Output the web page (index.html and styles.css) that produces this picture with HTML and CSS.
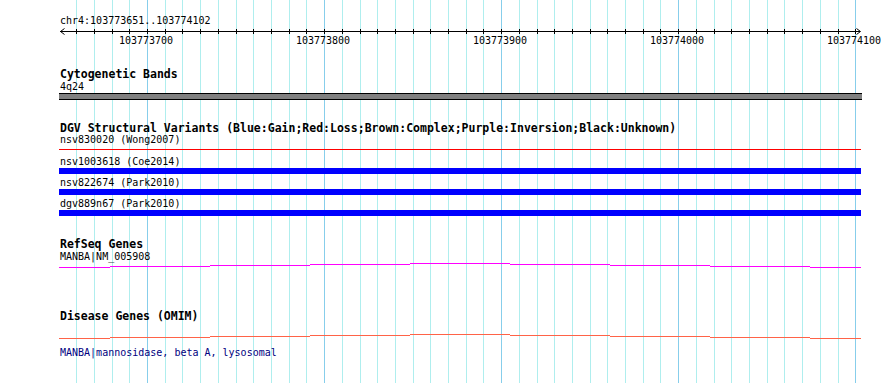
FILE: index.html
```html
<!DOCTYPE html>
<html lang="en">
<head>
    <meta charset="UTF-8">
    <meta name="viewport" content="width=device-width, initial-scale=1.0">
    <title>chr4:103773651..103774102</title>
    <link rel="stylesheet" href="styles.css">
</head>
<body>
    <div class="view">
        <div class="grid" id="grid"></div>

        <div class="content">
            <div class="ruler">
                <div class="ruler-label">chr4:103773651..103774102</div>
                <div class="scale" id="scale">
                    <div class="axis"></div>
                    <svg class="arrow arrow-left" width="5" height="7" viewBox="0 0 5 7">
                        <polyline points="4.5,0.5 0.5,3.5 4.5,6.5"></polyline>
                    </svg>
                    <svg class="arrow arrow-right" width="5" height="7" viewBox="0 0 5 7">
                        <polyline points="0.5,0.5 4.5,3.5 0.5,6.5"></polyline>
                    </svg>
                </div>
            </div>

            <div class="track track-cyto">
                <div class="track-title">Cytogenetic Bands</div>
                <div class="feature-label label-first">4q24</div>
                <div class="band"></div>
            </div>

            <div class="track track-dgv">
                <div class="track-title">DGV Structural Variants (Blue:Gain;Red:Loss;Brown:Complex;Purple:Inversion;Black:Unknown)</div>
                <div class="feature-label label-first">nsv830020 (Wong2007)</div>
                <div class="loss-line"></div>
                <div class="feature-label label-gap">nsv1003618 (Coe2014)</div>
                <div class="gain-bar"></div>
                <div class="feature-label">nsv822674 (Park2010)</div>
                <div class="gain-bar"></div>
                <div class="feature-label">dgv889n67 (Park2010)</div>
                <div class="gain-bar"></div>
            </div>

            <div class="track track-refseq">
                <div class="track-title">RefSeq Genes</div>
                <div class="feature-label label-tight">MANBA|NM_005908</div>
                <svg class="gene-line gene-refseq" width="802" height="6" viewBox="0 0 802 6">
                    <rect x="0" y="5" width="51" height="1"></rect>
                    <rect x="51" y="4" width="100" height="1"></rect>
                    <rect x="151" y="3" width="100" height="1"></rect>
                    <rect x="251" y="2" width="100" height="1"></rect>
                    <rect x="351" y="1" width="100" height="1"></rect>
                    <rect x="451" y="2" width="100" height="1"></rect>
                    <rect x="551" y="3" width="100" height="1"></rect>
                    <rect x="651" y="4" width="100" height="1"></rect>
                    <rect x="751" y="5" width="51" height="1"></rect>
                </svg>
            </div>

            <div class="track track-omim">
                <div class="track-title">Disease Genes (OMIM)</div>
                <svg class="gene-line gene-omim" width="802" height="6" viewBox="0 0 802 6">
                    <rect x="0" y="5" width="51" height="1"></rect>
                    <rect x="51" y="4" width="100" height="1"></rect>
                    <rect x="151" y="3" width="100" height="1"></rect>
                    <rect x="251" y="2" width="100" height="1"></rect>
                    <rect x="351" y="1" width="100" height="1"></rect>
                    <rect x="451" y="2" width="100" height="1"></rect>
                    <rect x="551" y="3" width="100" height="1"></rect>
                    <rect x="651" y="4" width="100" height="1"></rect>
                    <rect x="751" y="5" width="51" height="1"></rect>
                </svg>
                <div class="feature-label omim-label">MANBA|mannosidase, beta A, lysosomal</div>
            </div>
        </div>
    </div>

    <script>
        const start = 103773651;
        const pxPerBase = 1.7705;
        const grid = document.getElementById('grid');
        const scale = document.getElementById('scale');

        function toX(pos) {
            return Math.round(60.3 + (pos - start) * pxPerBase);
        }

        for (let pos = 103773660; pos <= 103774100; pos += 10) {
            const x = toX(pos);
            const major = pos % 100 === 0;

            const line = document.createElement('div');
            line.className = major ? 'gridline major' : 'gridline';
            line.style.left = x + 'px';
            grid.appendChild(line);

            const tick = document.createElement('div');
            tick.className = 'tick';
            tick.style.left = x + 'px';
            scale.appendChild(tick);

            if (major) {
                const label = document.createElement('div');
                label.className = 'tick-label';
                label.style.left = (x - 31) + 'px';
                label.textContent = pos;
                scale.appendChild(label);
            }
        }
    </script>
</body>
</html>
```

FILE: styles.css
```css
* {
    margin: 0;
    padding: 0;
    box-sizing: border-box;
}

body {
    background: white;
    font-family: "DejaVu Sans Mono", "Liberation Mono", monospace;
    color: black;
}

.view {
    position: relative;
    width: 890px;
    height: 383px;
    overflow: hidden;
    background: white;
}

.grid {
    position: absolute;
    top: 0;
    left: 0;
    right: 0;
    bottom: 0;
    z-index: 0;
}

.gridline {
    position: absolute;
    top: 0;
    bottom: 0;
    width: 1px;
    background: #afeeee;
}

.gridline.major {
    background: #87ceeb;
}

.content {
    position: relative;
    z-index: 1;
    padding-left: 60px;
}

/* ruler */

.ruler-label {
    margin-top: 16px;
    font-size: 10px;
    line-height: 10px;
}

.scale {
    position: relative;
    height: 20px;
    margin-left: -60px;
}

.axis {
    position: absolute;
    top: 5px;
    left: 60px;
    width: 800px;
    height: 1px;
    background: black;
}

.arrow {
    position: absolute;
    top: 2px;
    fill: none;
    stroke: black;
    stroke-width: 1;
}

.arrow-left {
    left: 60px;
}

.arrow-right {
    left: 856px;
}

.tick {
    position: absolute;
    top: 3px;
    width: 1px;
    height: 5px;
    background: black;
}

.tick-label {
    position: absolute;
    top: 10px;
    width: 60px;
    text-align: center;
    font-size: 10px;
    line-height: 10px;
}

/* tracks */

.track-title {
    font-size: 11.5px;
    line-height: 12px;
    font-weight: bold;
    white-space: nowrap;
}

.feature-label {
    margin-top: 4px;
    font-size: 10px;
    line-height: 10px;
    white-space: nowrap;
}

.feature-label.label-first {
    margin-top: 1px;
}

.feature-label.label-gap {
    margin-top: 7px;
}

.feature-label.label-tight {
    margin-top: 2px;
}

.track-cyto {
    margin-top: 22px;
}

.track-cyto .label-first {
    margin-top: 2px;
}

.band {
    margin-top: 1px;
    margin-left: -1px;
    width: 803px;
    height: 7px;
    background: #808080;
    border-top: 1px solid black;
    border-bottom: 1px solid black;
}

.track-dgv {
    margin-top: 22px;
}

.loss-line {
    margin-top: 4px;
    margin-left: -1px;
    width: 802px;
    height: 1px;
    background: #ff0000;
}

.gain-bar {
    margin-top: 1px;
    margin-left: -1px;
    width: 802px;
    height: 6px;
    background: #0000ff;
}

.track-refseq {
    margin-top: 22px;
}

.gene-line {
    display: block;
    margin-left: -1px;
    shape-rendering: crispEdges;
}

.gene-refseq {
    margin-top: 0;
    fill: #ff00ff;
}

.track-omim {
    margin-top: 42px;
}

.gene-omim {
    margin-top: 11px;
    fill: #ff6347;
}

.omim-label {
    margin-top: 9px;
    color: #000080;
}
```
